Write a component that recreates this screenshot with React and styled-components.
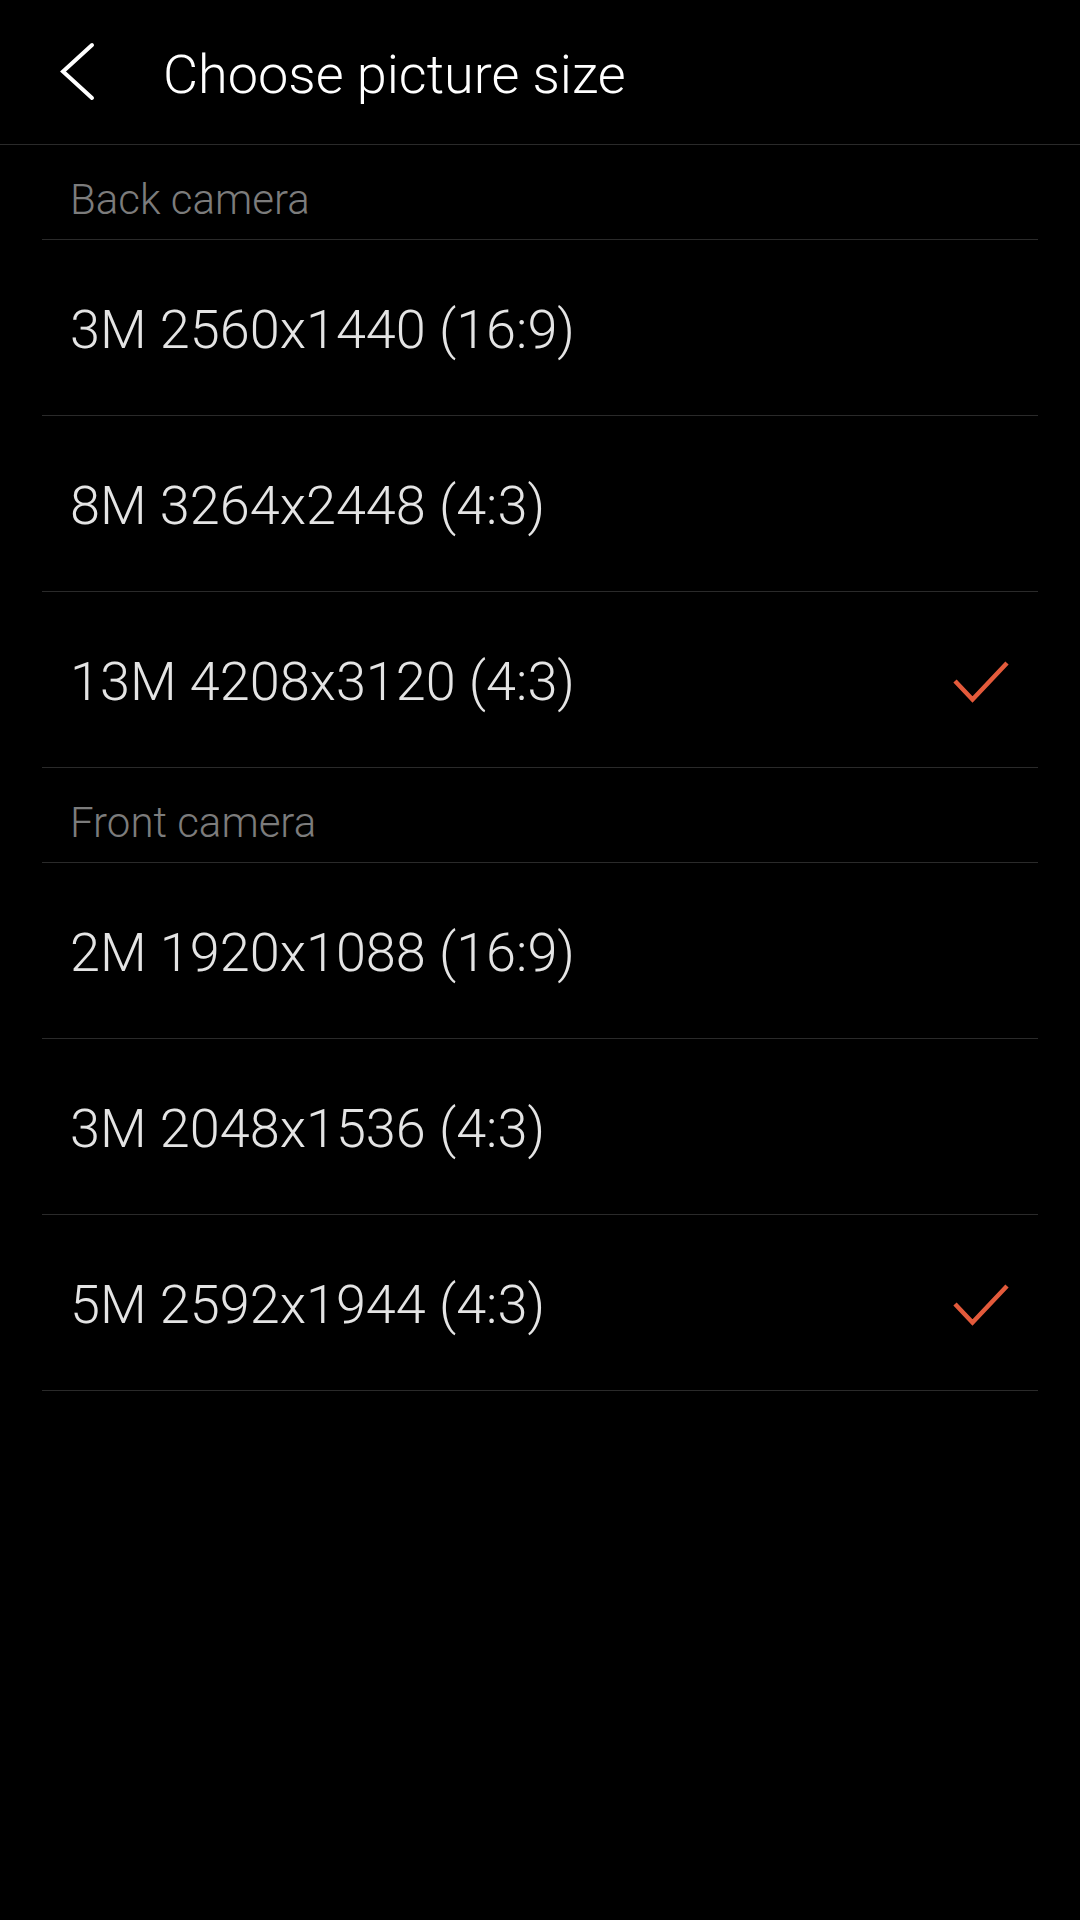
import React from "react";
import styled, { createGlobalStyle } from "styled-components";

const Global = createGlobalStyle`
  html, body { margin: 0; padding: 0; background: #000; }
  body { font-family: Roboto, "Noto Sans", "Liberation Sans", sans-serif; }
  #root { min-height: 1920px; background: #000; }
`;

const Screen = styled.div`
  width: 1080px;
  min-height: 1920px;
  background: #000;
  display: flex;
  flex-direction: column;
`;

const Header = styled.header`
  height: 145px;
  border-bottom: 1px solid #2a2a2a;
  display: flex;
  align-items: center;
  box-sizing: border-box;
  padding-left: 58px;
`;

const BackButton = styled.button`
  background: none;
  border: 0;
  padding: 0;
  width: 40px;
  height: 60px;
  display: flex;
  align-items: center;
  justify-content: center;
  margin-right: 65px;
  cursor: pointer;
`;

const Title = styled.h1`
  margin: 4px 0 0;
  font-size: 54px;
  font-weight: 300;
  color: #fff;
  letter-spacing: 0;
`;

const List = styled.div`
  padding: 0 42px;
  display: flex;
  flex-direction: column;
`;

const SectionHeader = styled.div`
  height: 95px;
  box-sizing: border-box;
  border-bottom: 1px solid #2a2a2a;
  display: flex;
  align-items: center;
  padding: 14px 28px 0;
  font-size: 42px;
  font-weight: 300;
  color: #7c7c7c;
`;

const Row = styled.div`
  height: 176px;
  box-sizing: border-box;
  border-bottom: 1px solid #2a2a2a;
  display: flex;
  align-items: center;
  justify-content: space-between;
  padding: 4px 28px 0;
`;

const RowLabel = styled.span`
  font-size: 54px;
  font-weight: 300;
  color: #e4e4e4;
`;

const Check = () => (
  <svg width="58" height="44" viewBox="0 0 58 44" fill="none">
    <path d="M3 21 L20.5 39.5 L55 3" stroke="#e35a3b" strokeWidth="4.5" strokeLinecap="butt" strokeLinejoin="miter" />
  </svg>
);

const BackArrow = () => (
  <svg width="40" height="60" viewBox="0 0 40 60" fill="none">
    <path d="M34 3 L5 29.5 L34 56" stroke="#fff" strokeWidth="4" strokeLinecap="round" strokeLinejoin="miter" />
  </svg>
);

const sections = [
  {
    title: "Back camera",
    items: [
      { label: "3M 2560x1440 (16:9)" },
      { label: "8M 3264x2448 (4:3)" },
      { label: "13M 4208x3120 (4:3)", selected: true },
    ],
  },
  {
    title: "Front camera",
    items: [
      { label: "2M 1920x1088 (16:9)" },
      { label: "3M 2048x1536 (4:3)" },
      { label: "5M 2592x1944 (4:3)", selected: true },
    ],
  },
];

export default function App() {
  return (
    <Screen>
      <Global />
      <Header>
        <BackButton aria-label="Back">
          <BackArrow />
        </BackButton>
        <Title>Choose picture size</Title>
      </Header>
      <List>
        {sections.map((s) => (
          <React.Fragment key={s.title}>
            <SectionHeader>{s.title}</SectionHeader>
            {s.items.map((it) => (
              <Row key={it.label}>
                <RowLabel>{it.label}</RowLabel>
                {it.selected && <Check />}
              </Row>
            ))}
          </React.Fragment>
        ))}
      </List>
    </Screen>
  );
}
